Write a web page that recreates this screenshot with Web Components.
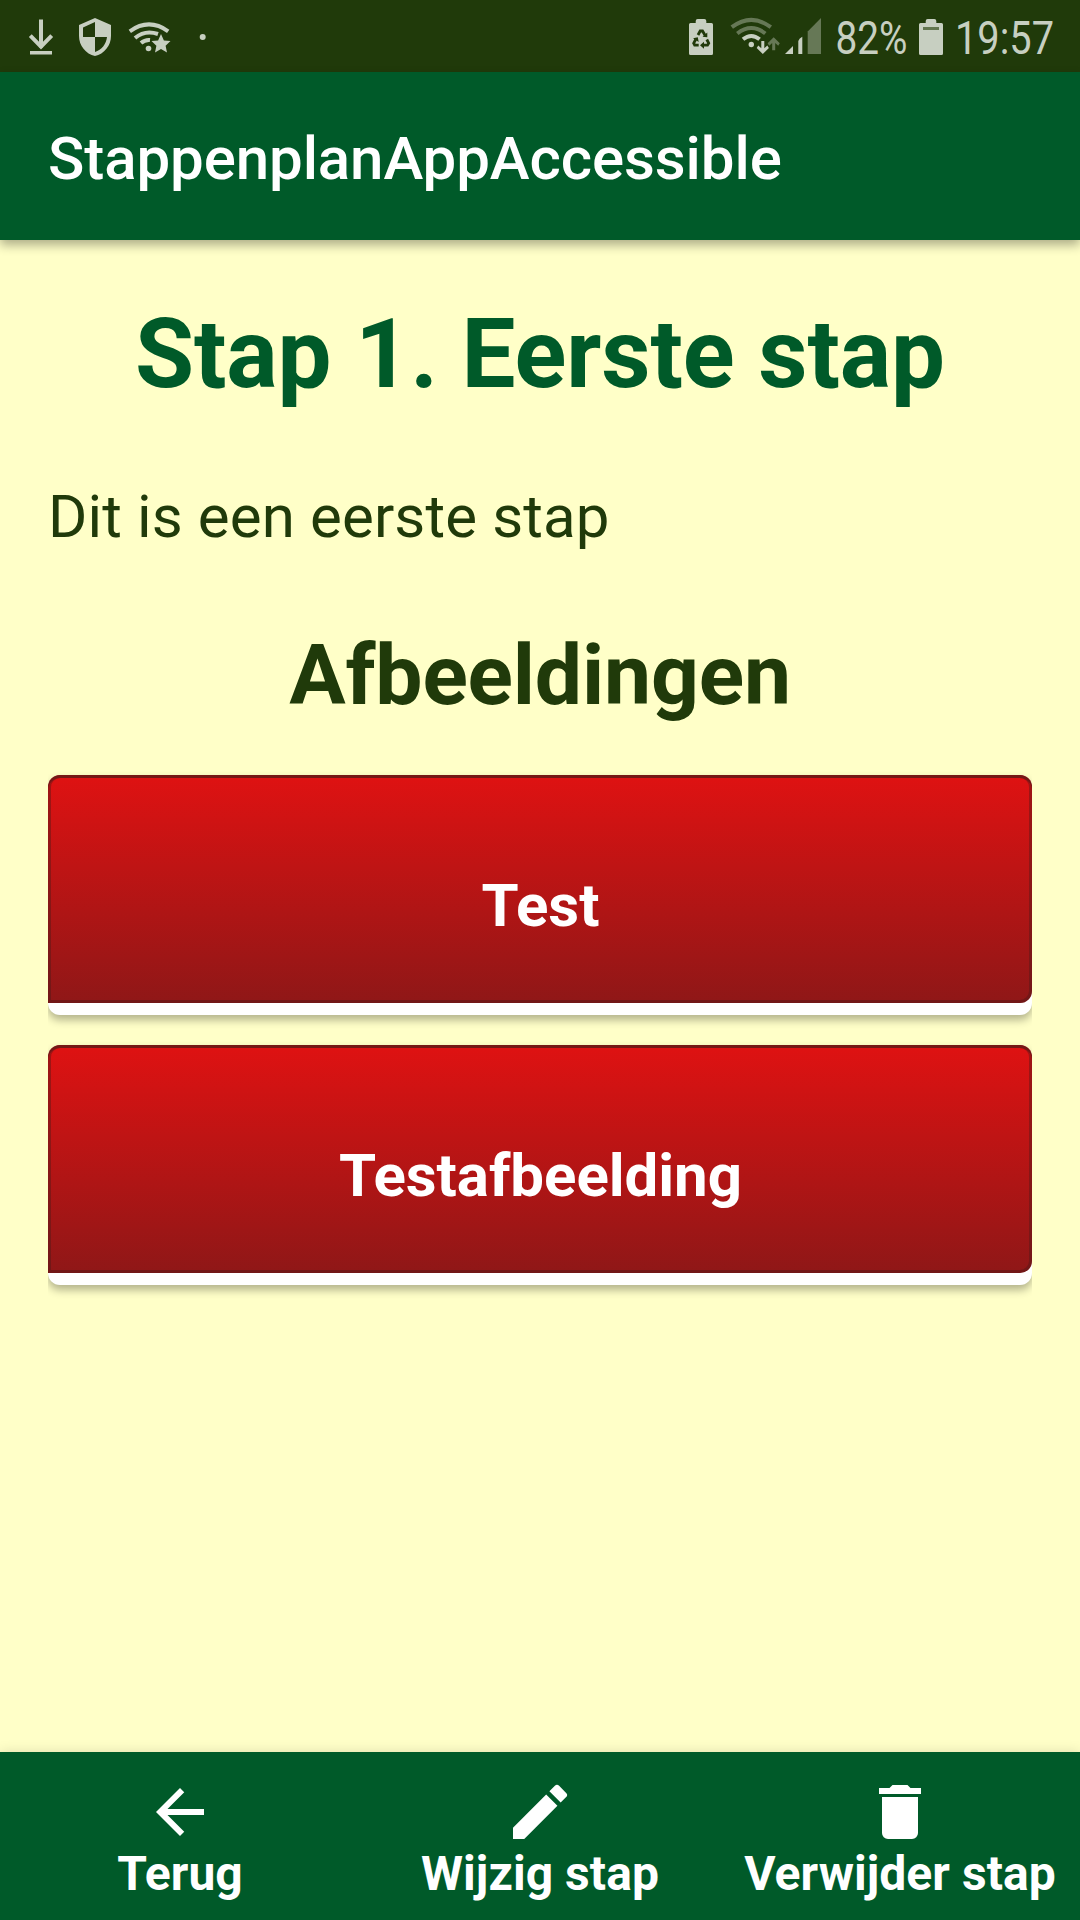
<!DOCTYPE html>
<html lang="nl">
<head>
<meta charset="utf-8">
<title>StappenplanAppAccessible</title>
<style>
html,body{margin:0;padding:0}
body{width:1080px;height:1920px;overflow:hidden;background:#ffffc8;font-family:Roboto,sans-serif}
</style>
</head>
<body>
<app-screen></app-screen>
<script>
const define = (name, html) => customElements.define(name, class extends HTMLElement {
  constructor() {
    super();
    this.attachShadow({ mode: 'open' }).innerHTML = html;
  }
});

define('status-bar', `
<style>
:host{display:flex;justify-content:space-between;height:72px;flex:none;background:#203a0a;color:#c7cfc1}
svg{display:block;height:72px;fill:#c7cfc1}
.l{stroke:#c7cfc1;fill:none;stroke-width:4}
.dim{opacity:.42}
text{font:400 46px Roboto,sans-serif}
</style>
<svg width="240" viewBox="0 0 240 72">
  <path d="M39 19.5h4v28h-4zM30 51h22v3.6H30z"/>
  <path class="l" d="M30.3 35.7L41 46.7l10.700-11"/>
  <path fill-rule="evenodd" d="M95 18l-16 7v11c0 9.600 6.800 18 16 20 9.200-2 16-10.400 16-20V25zM95 22v15H83v-9.500zM95 37h12c-.7 7-5.400 13-12 15z"/>
  <path class="l" d="M129.800 31.300Q149 17.500 168.200 31.300M135 38Q145 29.500 158 34M141 43Q145 39.500 150 40"/>
  <circle cx="148.500" cy="48.500" r="2.800"/>
  <path d="M161 34l2.900 6.400 6.600.7-4.900 4.600 1.400 6.800-6-3.500-6 3.500 1.400-6.800-4.900-4.600 6.600-.7z"/>
  <circle cx="202.700" cy="37" r="3"/>
</svg>
<svg width="410" viewBox="670 0 410 72">
  <path d="M690.500 23h5.200v-2q0-2 2-2h6.600q2 0 2 2v2h5.200q1.500 0 1.500 1.500v29q0 1.500-1.500 1.500h-21q-1.500 0-1.500-1.500v-29q0-1.500 1.500-1.500z"/>
  <g fill="none" stroke="#203a0a" stroke-width="2.800">
    <path d="M698 35l2.200-4h2.300l2.700 4.500M706.800 39.500l1.900 3.700-1.200 2H703M698.700 45.200h-4l-1-2 2-3.700"/>
  </g>
  <path fill="#203a0a" d="M702.500 36.800l4.800.4v-4.700zM704 41.700v7l-4-3.500zM693 38.300l4.800-1 .9 4.800z"/>
  <path class="l dim" d="M731.800 27.200Q751.300 12.500 770.800 27.200M737.300 33.500Q751.300 22.500 765.300 33.500"/>
  <path class="l" d="M743 39.300Q751.300 32.700 759.600 39.300"/>
  <circle cx="751.300" cy="44.500" r="2.700"/>
  <path d="M761.300 41h3v7.300l3-2.800 1.600 2.600-6.100 6-6.100-6 1.600-2.600 3 2.800z"/>
  <path class="dim" d="M772.200 50.300h3v-7.300l3 2.800 1.600-2.600-6.100-6-6.100 6 1.600 2.600 3-2.800z"/>
  <path d="M785 54h8v-8zM798.300 54V41q1-3 4-4.300V54z"/>
  <path class="dim" d="M807.700 54V31.500L821 18v36z"/>
  <text x="835.500" y="54" textLength="72" lengthAdjust="spacingAndGlyphs">82%</text>
  <path d="M920.500 23h5.200v-2q0-2 2-2h6.600q2 0 2 2v2h5.200q1.500 0 1.500 1.500v29q0 1.500-1.500 1.500h-21q-1.500 0-1.500-1.500v-29q0-1.500 1.500-1.500z"/>
  <path fill="#62764f" d="M923 27h16v3h-16z"/>
  <text x="955" y="54" textLength="99" lengthAdjust="spacingAndGlyphs">19:57</text>
</svg>`);

define('app-bar', `
<style>
:host{display:flex;align-items:center;height:168px;flex:none;box-sizing:border-box;padding:5px 48px 0;background:#005a29;color:#fff;
font:500 60px/70px Roboto,sans-serif;letter-spacing:-.09px;box-shadow:0 5px 10px rgba(0,0,0,.32);z-index:1}
</style><slot></slot>`);

define('step-heading', `
<style>
:host{display:block;text-align:center;font:700 96px/112px Roboto,sans-serif;letter-spacing:-.13px;color:#005a29}
:host([level="2"]){font-size:84px;line-height:98px;letter-spacing:-.18px;color:#203a0a}
</style><slot></slot>`);

define('image-button', `
<style>
:host{display:block;height:240px;border-radius:12px;background:#fff;box-shadow:0 5px 8px rgba(0,0,0,.3)}
.face{display:flex;align-items:center;justify-content:center;box-sizing:border-box;height:228px;padding-top:34px;border-radius:12px 12px 12px 0;
background:linear-gradient(#df1212,#8f1717);box-shadow:inset 0 0 0 3px rgba(70,26,24,.4),inset 0 3px 0 rgba(70,30,24,.5);
color:#fff;font:700 60px/70px Roboto,sans-serif;letter-spacing:-.05px;text-indent:1px}
</style><div class="face"><slot></slot></div>`);

define('nav-item', `
<style>
:host{display:flex;flex-direction:column;align-items:center;flex:1 1 0;min-width:0;padding-top:24px;color:#fff;white-space:nowrap;
font:700 48px/56px Roboto,sans-serif;letter-spacing:.06px}
::slotted(svg){display:block;width:72px;height:72px;fill:#fff}
.label{margin-top:-2px}
</style><slot name="icon"></slot><div class="label"><slot></slot></div>`);

define('bottom-nav', `
<style>
:host{display:flex;height:168px;flex:none;background:#005a29;box-shadow:0 0 12px rgba(0,0,0,.13)}
</style><slot></slot>`);

define('app-screen', `
<style>
:host{display:flex;flex-direction:column;width:1080px;height:1920px;background:#ffffc8}
main{flex:1;display:flex;flex-direction:column;padding:58px 48px 0}
p{margin:72px 0 75px;font:400 60px/70px Roboto,sans-serif;letter-spacing:.13px;color:#203a0a}
.list{display:flex;flex-direction:column;gap:30px;margin-top:50px;padding-bottom:20px;overflow-x:clip}
</style>
<status-bar></status-bar>
<app-bar>StappenplanAppAccessible</app-bar>
<main>
  <step-heading>Stap 1. Eerste stap</step-heading>
  <p>Dit is een eerste stap</p>
  <step-heading level="2">Afbeeldingen</step-heading>
  <div class="list">
    <image-button>Test</image-button>
    <image-button>Testafbeelding</image-button>
  </div>
</main>
<bottom-nav>
  <nav-item><svg slot="icon" viewBox="0 0 24 24"><path d="M20 11H7.830l5.590-5.590L12 4l-8 8 8 8 1.410-1.410L7.830 13H20z"/></svg>Terug</nav-item>
  <nav-item><svg slot="icon" viewBox="0 0 24 24"><path d="M3 17.250V21h3.750L17.810 9.940l-3.750-3.750zM20.710 7.040a1 1 0 0 0 0-1.410l-2.340-2.340a1 1 0 0 0-1.410 0l-1.830 1.830 3.750 3.750z"/></svg>Wijzig stap</nav-item>
  <nav-item><svg slot="icon" viewBox="0 0 24 24"><path d="M6 19a2 2 0 0 0 2 2h8a2 2 0 0 0 2-2V7H6zM19 4h-3.500l-1-1h-5l-1 1H5v2h14z"/></svg>Verwijder stap</nav-item>
</bottom-nav>`);
</script>
</body>
</html>
